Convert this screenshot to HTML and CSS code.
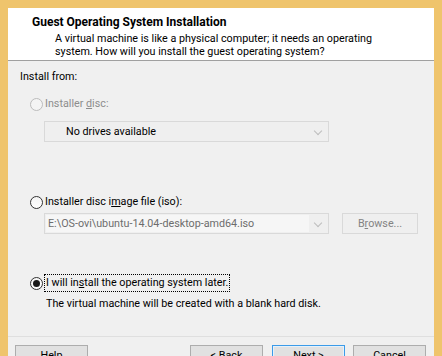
FILE: index.html
```html
<!DOCTYPE html>
<html lang="en">
<head>
    <meta charset="UTF-8">
    <meta name="viewport" content="width=device-width, initial-scale=1.0">
    <title>New Virtual Machine Wizard</title>
    <link rel="stylesheet" href="styles.css">
</head>
<body>
    <div class="window">
        <div class="header">
            <h1 class="title">Guest Operating System Installation</h1>
            <p class="desc">A virtual machine is like a physical computer; it needs an operating<br>system. How will you install the guest operating system?</p>
        </div>

        <div class="content">
            <div class="group-label">Install from:</div>

            <div class="radio-row disabled row-disc">
                <span class="radio"></span>
                <span class="radio-text">Installer <u>d</u>isc:</span>
            </div>
            <div class="combo disabled combo-disc">
                <span class="combo-text">No drives available</span>
                <span class="chevron"></span>
            </div>

            <div class="radio-row row-iso">
                <span class="radio"></span>
                <span class="radio-text">Installer disc i<u>m</u>age file (iso):</span>
            </div>
            <div class="iso-row">
                <div class="combo combo-iso">
                    <span class="combo-field">E:\OS-ovi\ubuntu-14.04-desktop-amd64.iso</span>
                    <span class="chevron"></span>
                </div>
                <button class="browse" disabled>B<u>r</u>owse...</button>
            </div>

            <div class="radio-row row-later">
                <span class="radio checked"></span>
                <span class="radio-text focused">I will in<u>s</u>tall the operating system later.</span>
            </div>
            <p class="note">The virtual machine will be created with a blank hard disk.</p>
        </div>

        <div class="footer">
            <button class="btn">Help</button>
            <div class="nav">
                <button class="btn">&lt; Back</button>
                <button class="btn default">Next &gt;</button>
                <button class="btn">Cancel</button>
            </div>
        </div>
    </div>
</body>
</html>
```
FILE: styles.css
```css
* {
    margin: 0;
    padding: 0;
    box-sizing: border-box;
}

body {
    font-family: Roboto, "Liberation Sans", sans-serif;
    font-size: 10.75px;
    color: #000;
    overflow: hidden;
}

.window {
    height: 356px;
    border: 8px solid #efc46c;
    border-bottom: none;
    background: #f0f0f0;
}

/* header band */
.header {
    height: 53px;
    background: #fff;
    border-bottom: 1px solid #a0a0a0;
    padding: 7px 0 0 24px;
}

.title {
    font-size: 12px;
    font-weight: 700;
    line-height: 14px;
}

.desc {
    margin: 3px 0 0 23px;
    line-height: 13px;
}

/* main area */
.content {
    padding: 9px 0 0 12px;
    height: 275px;
}

.group-label {
    line-height: 14px;
}

.radio-row {
    display: flex;
    align-items: center;
    height: 18px;
    margin-left: 10px;
}

.row-disc {
    margin-top: 11px;
}

.row-iso {
    margin-top: 51px;
}

.row-later {
    margin-top: 40px;
}

.radio {
    width: 13px;
    height: 13px;
    border: 1px solid #333;
    border-radius: 50%;
    background: linear-gradient(#f4f4f4, #fff);
    display: flex;
    align-items: center;
    justify-content: center;
    flex-shrink: 0;
}

.radio.checked::after {
    content: '';
    width: 7px;
    height: 7px;
    border-radius: 50%;
    background: #1a1a1a;
}

.radio-text {
    margin-left: 2px;
    line-height: 16px;
}

.radio-text.focused {
    margin-left: 1px;
    padding: 0 1px;
    border: 1px dotted #000;
}

.disabled .radio {
    border-color: #bcbcbc;
    background: #f4f4f4;
}

.disabled .radio-text {
    color: #8d8d8d;
}

.combo {
    position: relative;
    display: flex;
    align-items: center;
    width: 285px;
    height: 21px;
    border: 1px solid #d9d9d9;
    background: #efefef;
}

.combo-disc {
    margin: 8px 0 0 24px;
}

.combo-text {
    padding-left: 21px;
}

.iso-row {
    display: flex;
    align-items: center;
    margin: 2px 0 0 24px;
}

.combo-field {
    width: 263px;
    height: 17px;
    margin-left: 1px;
    padding-left: 2px;
    line-height: 17px;
    color: #6d6d6d;
    background: #f6f6f6;
    white-space: nowrap;
    overflow: hidden;
}

.chevron {
    position: absolute;
    right: 7px;
    top: 6px;
    width: 6px;
    height: 6px;
    border-right: 1.5px solid #bdbdbd;
    border-bottom: 1.5px solid #bdbdbd;
    transform: rotate(45deg);
}

.browse {
    margin-left: 13px;
    width: 76px;
    height: 21px;
    font: inherit;
    color: #838383;
    background: #efefef;
    border: 1px solid #d9d9d9;
}

.note {
    margin: 5px 0 0 26px;
    line-height: 14px;
}

/* button bar */
.footer {
    display: flex;
    border-top: 1px solid #dfdfdf;
    padding: 8px 8px 0 7px;
}

.nav {
    display: flex;
    gap: 8px;
    margin-left: auto;
}

.nav .btn:first-child {
    margin-right: 1px;
}

.btn {
    width: 73px;
    height: 23px;
    padding-bottom: 3px;
    font: inherit;
    color: #000;
    background: #e1e1e1;
    border: 1px solid #adadad;
}

.btn.default {
    border-color: #3c9be8;
    box-shadow: inset 0 0 0 1px #e5f1fb;
}
```
